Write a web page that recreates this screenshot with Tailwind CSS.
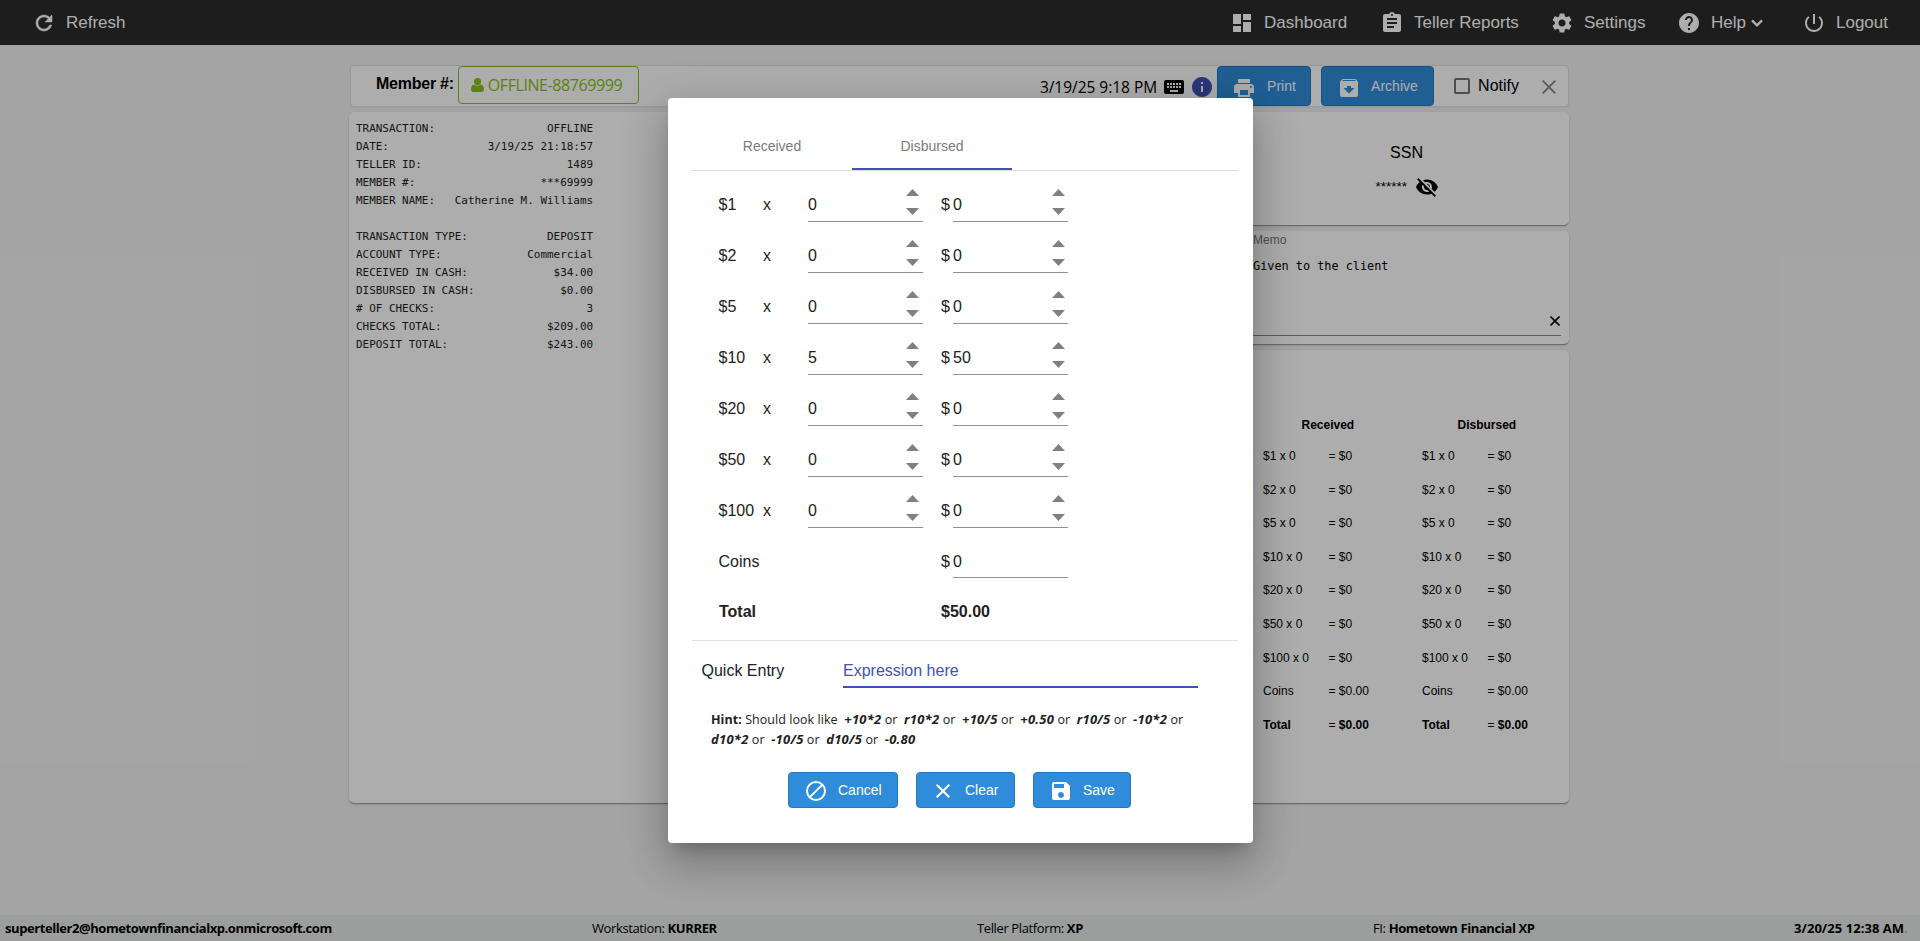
<!DOCTYPE html>
<html lang="en">
<head>
<meta charset="utf-8">
<title>Teller</title>
<script src="https://cdn.jsdelivr.net/npm/@tailwindcss/browser@4"></script>
</head>
<body class="relative h-[941px] w-[1920px] overflow-hidden bg-[#f2f2f2] font-['Liberation_Sans',sans-serif] text-black">
<div class="flex h-full flex-col">
  <nav class="flex h-[45px] shrink-0 items-center bg-[#2c2c2c] pr-8 pl-[32px] text-[17px] text-white">
    <div class="flex items-center">
      <svg class="h-6 w-6" viewBox="0 0 24 24" fill="currentColor" stroke="currentColor" stroke-width=".5"><path d="M17.65 6.35C16.2 4.9 14.21 4 12 4c-4.42 0-7.99 3.58-7.99 8s3.57 8 7.99 8c3.73 0 6.84-2.55 7.73-6h-2.08c-.82 2.33-3.04 4-5.65 4-3.31 0-6-2.69-6-6s2.69-6 6-6c1.66 0 3.14.69 4.22 1.78L13 11h7V4l-2.35 2.35z"/></svg>
      <span class="ml-[10px]">Refresh</span>
    </div>
    <div class="ml-auto flex items-center">
      <div class="flex w-[150px] items-center"><svg class="mr-[10px] h-6 w-6" viewBox="0 0 24 24" fill="currentColor"><path d="M3 13h8V3H3v10zm0 8h8v-6H3v6zm10 0h8V11h-8v10zm0-18v6h8V3h-8z"/></svg>Dashboard</div>
      <div class="flex w-[170px] items-center"><svg class="mr-[10px] h-6 w-6" viewBox="0 0 24 24" fill="currentColor"><path d="M19 3h-4.18C14.4 1.84 13.3 1 12 1c-1.3 0-2.4.84-2.82 2H5c-1.1 0-2 .9-2 2v14c0 1.100.9 2 2 2h14c1.100 0 2-.9 2-2V5c0-1.100-.9-2-2-2zm-7 0c.55 0 1 .45 1 1s-.45 1-1 1-1-.45-1-1 .45-1 1-1zm2 14H7v-2h7v2zm3-4H7v-2h10v2zm0-4H7V7h10v2z"/></svg>Teller Reports</div>
      <div class="flex w-[127px] items-center"><svg class="mr-[10px] h-6 w-6" viewBox="0 0 24 24" fill="currentColor"><path d="M19.140 12.940c.04-.3.06-.61.06-.940 0-.32-.02-.64-.07-.940l2.030-1.580c.18-.14.23-.41.12-.610l-1.920-3.320c-.12-.22-.37-.29-.59-.22l-2.390.960c-.5-.38-1.030-.7-1.620-.940l-.36-2.540c-.04-.24-.24-.41-.48-.41h-3.840c-.24 0-.43.17-.47.41l-.36 2.540c-.59.24-1.130.57-1.620.940l-2.390-.960c-.22-.08-.47 0-.59.22L2.740 8.870c-.12.21-.08.47.12.610l2.030 1.580c-.05.3-.09.63-.09.940s.02.64.07.940l-2.030 1.580c-.18.14-.23.41-.12.610l1.920 3.320c.12.22.37.29.59.22l2.390-.960c.5.38 1.030.7 1.620.940l.36 2.540c.05.24.24.41.48.41h3.840c.24 0 .44-.17.47-.41l.36-2.540c.59-.24 1.130-.56 1.620-.940l2.390.960c.22.08.47 0 .59-.22l1.920-3.320c.12-.22.07-.47-.12-.610l-2.010-1.580zM12 15.600c-1.980 0-3.600-1.620-3.600-3.600s1.620-3.600 3.600-3.600 3.600 1.620 3.600 3.600-1.620 3.600-3.600 3.600z"/></svg>Settings</div>
      <div class="flex w-[125px] items-center"><svg class="mr-[10px] h-6 w-6" viewBox="0 0 24 24" fill="currentColor"><path d="M12 2C6.480 2 2 6.480 2 12s4.480 10 10 10 10-4.480 10-10S17.520 2 12 2zm1 17h-2v-2h2v2zm2.070-7.750l-.9.920C13.450 12.900 13 13.500 13 15h-2v-.5c0-1.100.45-2.100 1.170-2.830l1.240-1.260c.37-.36.59-.86.59-1.410 0-1.100-.9-2-2-2s-2 .9-2 2H8c0-2.210 1.790-4 4-4s4 1.790 4 4c0 .88-.36 1.680-.93 2.250z"/></svg>Help<svg class="ml-[5px] h-3 w-3" viewBox="0 0 12 12" fill="none" stroke="currentColor" stroke-width="2.4"><path d="M1 3.300l5 5 5-5"/></svg></div>
      <div class="flex items-center"><svg class="mr-[10px] h-6 w-6" viewBox="0 0 24 24" fill="currentColor"><path d="M13 3h-2v10h2V3zm4.830 2.170l-1.420 1.420C17.990 7.860 19 9.810 19 12c0 3.870-3.130 7-7 7s-7-3.130-7-7c0-2.190 1.010-4.140 2.580-5.420L6.170 5.170C4.230 6.820 3 9.260 3 12c0 4.970 4.030 9 9 9s9-4.030 9-9c0-2.740-1.230-5.180-3.170-6.830z"/></svg>Logout</div>
    </div>
  </nav>

  <main class="ml-[349px] flex w-[1220px] flex-1 flex-col pt-5">
    <header class="ml-[1px] flex h-[42px] shrink-0 items-center rounded border border-[#e0e0e0] bg-white pr-3 pl-[25px] shadow-xs">
      <b class="-translate-y-[2px] text-base tracking-[-0.25px] whitespace-nowrap">Member #:</b>
      <div class="mb-[2px] ml-[4px] flex h-[38px] w-[181px] items-center rounded border border-[#86c020] pl-3 font-['Open_Sans',sans-serif] text-base text-[#86c020]">
        <svg class="mr-[4px] h-[14px] w-[13px]" viewBox="0 0 13 14" fill="currentColor"><circle cx="6.500" cy="3.600" r="3.600"/><path d="M0 11.500C0 8.500 1.200 6.800 3 6.500c2 1.700 5 1.700 7 0 1.800.3 3 2 3 5C13 13 12 14 10.800 14H2.200C1 14 0 13 0 11.500z"/></svg>
        <span class="text-[16px] tracking-[-0.42px]">OFFLINE-88769999</span>
      </div>
      <div class="ml-auto flex items-center">
        <span class="mt-[4px] font-['Open_Sans',sans-serif] text-[15.5px] tracking-[-0.03px] whitespace-nowrap">3/19/25 9:18 PM</span>
        <svg class="mt-[2px] ml-[5px] h-6 w-6" viewBox="0 0 24 24" fill="currentColor"><path d="M20 5H4c-1.100 0-1.990.9-1.990 2L2 17c0 1.100.9 2 2 2h16c1.100 0 2-.9 2-2V7c0-1.100-.9-2-2-2zm-9 3h2v2h-2V8zm0 3h2v2h-2v-2zM8 8h2v2H8V8zm0 3h2v2H8v-2zm-1 2H5v-2h2v2zm0-3H5V8h2v2zm9 7H8v-2h8v2zm0-4h-2v-2h2v2zm0-3h-2V8h2v2zm3 3h-2v-2h2v2zm0-3h-2V8h2v2z"/></svg>
        <svg class="mt-[2px] ml-[4px] h-6 w-6 text-[#3f51b5]" viewBox="0 0 24 24" fill="currentColor"><path d="M12 2C6.480 2 2 6.480 2 12s4.480 10 10 10 10-4.480 10-10S17.520 2 12 2z"/><path fill="#fff" d="M11 11h2v6h-2zM11 7h2v2h-2z"/></svg>
        <div class="ml-[3px] flex h-10 w-[94px] items-center rounded border border-[#2377c2] bg-[#2f8cdb] pl-[14px] text-sm text-white"><svg class="mt-1 mr-[11px] h-6 w-6" viewBox="0 0 24 24" fill="currentColor"><path d="M19 8H5c-1.660 0-3 1.340-3 3v6h4v4h12v-4h4v-6c0-1.660-1.340-3-3-3zm-3 11H8v-5h8v5zm3-7c-.55 0-1-.45-1-1s.45-1 1-1 1 .45 1 1-.45 1-1 1zm-1-9H6v4h12V3z"/></svg>Print</div>
        <div class="ml-[10px] flex h-10 w-[113px] items-center rounded border border-[#2377c2] bg-[#2f8cdb] pl-[15px] text-sm text-white"><svg class="mt-1 mr-[10px] h-6 w-6" viewBox="0 0 24 24" fill="currentColor"><path d="M20.540 5.230l-1.390-1.680C18.880 3.210 18.470 3 18 3H6c-.47 0-.88.210-1.160.550L3.460 5.230C3.170 5.570 3 6.020 3 6.500V19c0 1.100.9 2 2 2h14c1.100 0 2-.9 2-2V6.500c0-.48-.17-.93-.46-1.270zM12 17.500L6.500 12H10v-2h4v2h3.500L12 17.500zM5.120 5l.810-1h12l.940 1H5.120z"/></svg>Archive</div>
        <span class="ml-[20px] h-4 w-4 rounded-xs border-2 border-[#757575]"></span>
        <span class="ml-2 text-base">Notify</span>
        <svg class="mt-[2px] ml-[23px] h-[14px] w-[14px] text-[#808080]" viewBox="0 0 14 14" fill="none" stroke="currentColor" stroke-width="1.700"><path d="M.7.700l12.600 12.600M13.300.700L.7 13.300"/></svg>
      </div>
    </header>

    <div class="mt-[5px] flex h-[691px] gap-2">
      <section class="w-[540px] rounded-[5px] bg-white pt-[8px] pl-[7px] shadow-[0_2px_1px_-1px_rgba(0,0,0,.2),0_1px_1px_rgba(0,0,0,.14),0_1px_3px_rgba(0,0,0,.12)]">
        <pre id="receipt" class="font-['DejaVu_Sans_Mono',monospace] text-[10.95px] leading-[18px] text-[#222]"></pre>
      </section>
      <div class="flex flex-1 flex-col gap-[6px]">
        <section class="flex h-[113px] flex-col items-end rounded-[5px] bg-white pt-[29px] pr-[130px] shadow-[0_2px_1px_-1px_rgba(0,0,0,.2),0_1px_1px_rgba(0,0,0,.14),0_1px_3px_rgba(0,0,0,.12)]">
          <div class="mr-[16px] text-base">SSN</div>
          <div class="mt-[10px] flex items-center"><span class="mr-[8px] text-[13.500px]">******</span><svg class="h-6 w-6" viewBox="0 0 24 24" fill="currentColor"><path d="M12 7c2.760 0 5 2.240 5 5 0 .65-.13 1.260-.36 1.830l2.920 2.920c1.510-1.260 2.700-2.890 3.430-4.750-1.730-4.390-6-7.500-11-7.500-1.400 0-2.740.250-3.980.7l2.160 2.160C10.740 7.130 11.350 7 12 7zM2 4.270l2.280 2.280.46.460C3.080 8.300 1.780 10.020 1 12c1.730 4.390 6 7.500 11 7.500 1.550 0 3.030-.3 4.380-.84l.42.42L19.730 22 21 20.730 3.270 3 2 4.270zM7.530 9.800l1.550 1.550c-.05.210-.08.430-.08.650 0 1.660 1.340 3 3 3 .22 0 .44-.03.65-.08l1.550 1.550c-.67.33-1.410.53-2.200.53-2.760 0-5-2.240-5-5 0-.79.2-1.530.53-2.200zm4.310-.780l3.150 3.150.02-.160c0-1.660-1.340-3-3-3l-.17.010z"/></svg></div>
        </section>
        <section class="flex h-[113px] flex-col rounded-[5px] bg-white pt-[2px] pr-2 shadow-[0_2px_1px_-1px_rgba(0,0,0,.2),0_1px_1px_rgba(0,0,0,.14),0_1px_3px_rgba(0,0,0,.12)]">
          <div class="flex h-[103px] flex-col border-b border-[#8a8a8a] pl-[356px]">
            <span class="text-xs leading-[14px] text-[#777]">Memo</span>
            <span class="mt-[10px] font-['DejaVu_Sans_Mono',monospace] text-[11.85px] leading-[18px] whitespace-nowrap">Given to the client</span>
            <svg class="mt-auto mr-[1px] mb-[9px] ml-auto h-[10px] w-[10px]" viewBox="0 0 10 10" fill="none" stroke="currentColor" stroke-width="1.600"><path d="M.5.5l9 9M9.500.5l-9 9"/></svg>
          </div>
        </section>
        <section class="flex flex-1 justify-end rounded-[5px] bg-white pt-[57px] shadow-[0_2px_1px_-1px_rgba(0,0,0,.2),0_1px_1px_rgba(0,0,0,.14),0_1px_3px_rgba(0,0,0,.12)]">
          <div id="cash" class="flex text-xs"></div>
        </section>
      </div>
    </div>
  </main>

  <footer class="flex h-[26px] shrink-0 items-center bg-[#e6e8e7] pt-[2px] pl-[5px] font-['Open_Sans',sans-serif] text-[13px] tracking-[-0.38px] whitespace-nowrap">
    <b class="w-[587px] tracking-[-0.43px]">superteller2@hometownfinancialxp.onmicrosoft.com</b>
    <span class="w-[385px]">Workstation: <b>KURRER</b></span>
    <span class="w-[396px]">Teller Platform: <b>XP</b></span>
    <span class="w-[421px]">FI: <b>Hometown Financial XP</b></span>
    <span class="tracking-[0.05px]"><b>3/20/25 12:38 AM</b><span class="text-[#999]">.</span></span>
  </footer>
</div>

<div class="absolute inset-0 bg-black/32"></div>

<div class="absolute top-[98px] left-[668px] flex h-[745px] w-[585px] flex-col rounded bg-white pr-[15px] pl-6 text-[#212121] shadow-[0_11px_15px_-7px_rgba(0,0,0,.2),0_24px_38px_3px_rgba(0,0,0,.14),0_9px_46px_8px_rgba(0,0,0,.12)]">
  <div class="mt-6 flex h-[49px] shrink-0 border-b border-[#dedede] text-sm text-[#7b7b7b]">
    <div class="flex w-40 items-center justify-center">Received</div>
    <div class="flex w-40 items-center justify-center border-b-2 border-[#3f51b5] pt-[2px]">Disbursed</div>
  </div>
  <div id="rows" class="text-base"></div>
  <div class="flex h-[57px] items-center pt-[10px] pl-[27px] text-base"><b class="w-[222px]">Total</b><b>$50.00</b></div>
  <div class="mt-[5px] flex h-[48px] items-end border-t border-[#e2e2e2] pl-[9.5px] text-base">
    <span class="w-[141.5px] pb-[5px]">Quick Entry</span>
    <span class="w-[355px] border-b-2 border-[#3f51b5] pb-[3px] text-[#3f51b5]">Expression here</span>
  </div>
  <div class="mt-[22px] ml-[19px] font-['Open_Sans',sans-serif] text-[12.500px] leading-5 tracking-[0.05px] whitespace-nowrap [&_i]:text-[13px] [&_i]:leading-none [&_i]:tracking-[0.25px]">
    <div class="h-5"><b>Hint:</b> Should look like&nbsp; <b><i>+10*2</i></b> or&nbsp; <b><i>r10*2</i></b> or&nbsp; <b><i>+10/5</i></b> or&nbsp; <b><i>+0.50</i></b> or&nbsp; <b><i>r10/5</i></b> or&nbsp; <b><i>-10*2</i></b> or</div>
    <div class="h-5"><b><i>d10*2</i></b> or&nbsp; <b><i>-10/5</i></b> or&nbsp; <b><i>d10/5</i></b> or&nbsp; <b><i>-0.80</i></b></div>
  </div>
  <div class="mt-[22px] ml-24 flex gap-[18px] text-sm text-white">
    <div class="flex h-9 w-[110px] items-center rounded border border-[#2377c2] bg-[#2f8cdb] pl-[15px]"><svg class="mt-[2px] mr-[10px] h-6 w-6" viewBox="0 0 24 24" fill="none" stroke="currentColor" stroke-width="2"><circle cx="12" cy="12" r="9"/><path d="M5.600 18.400L18.400 5.600"/></svg>Cancel</div>
    <div class="flex h-9 w-[99px] items-center rounded border border-[#2377c2] bg-[#2f8cdb] pl-[14px]"><svg class="mt-[2px] mr-[10px] h-6 w-6" viewBox="0 0 24 24" fill="currentColor"><path d="M19 6.410L17.590 5 12 10.590 6.410 5 5 6.410 10.590 12 5 17.590 6.410 19 12 13.410 17.590 19 19 17.590 13.410 12z"/></svg>Clear</div>
    <div class="flex h-9 w-[98px] items-center rounded border border-[#2377c2] bg-[#2f8cdb] pl-[15px]"><svg class="mt-[2px] mr-[10px] h-6 w-6" viewBox="0 0 24 24" fill="currentColor"><path d="M17 3H5c-1.110 0-2 .9-2 2v14c0 1.100.890 2 2 2h14c1.100 0 2-.9 2-2V7l-4-4zm-5 16c-1.660 0-3-1.340-3-3s1.340-3 3-3 3 1.340 3 3-1.340 3-3 3zm3-10H5V5h10v4z"/></svg>Save</div>
  </div>
</div>

<script>
const receipt = [
  ['TRANSACTION:', 'OFFLINE'], ['DATE:', '3/19/25 21:18:57'], ['TELLER ID:', '1489'],
  ['MEMBER #:', '***69999'], ['MEMBER NAME:', 'Catherine M. Williams'], ['', ''],
  ['TRANSACTION TYPE:', 'DEPOSIT'], ['ACCOUNT TYPE:', 'Commercial'], ['RECEIVED IN CASH:', '$34.00'],
  ['DISBURSED IN CASH:', '$0.00'], ['# OF CHECKS:', '3'], ['CHECKS TOTAL:', '$209.00'], ['DEPOSIT TOTAL:', '$243.00'],
];
document.getElementById('receipt').textContent = receipt.map(([a, b]) => a + b.padStart(36 - a.length)).join('\n');

const bills = [1, 2, 5, 10, 20, 50, 100];
const cashColumn = (title, cls) => `<div class="${cls}"><div class="${title === 'Received' ? 'h-[31px] pl-[38.5px] font-bold' : 'h-[31px] pl-[35.5px] font-bold'}">${title}</div>` +
  bills.map(b => [`$${b} x 0`, '= $0', '']).concat([['Coins', '= $0.00', ''], ['Total', '= <b>$0.00</b>', 'font-bold']])
    .map(([a, v, w]) => `<div class="flex h-[33.6px] items-start whitespace-nowrap"><span class="w-[65.5px] ${w}">${a}</span><span>${v}</span></div>`).join('') + '</div>';
document.getElementById('cash').innerHTML = cashColumn('Received', 'w-[159px] pt-[10px]') + cashColumn('Disbursed', 'w-[147px] pt-[10px]');

const spin = '<svg class="mr-[4px] mb-[6px] ml-auto h-[26px] w-[13px]" viewBox="0 0 13 26" fill="#808080"><path d="M0 7L6.500 0 13 7zM0 19l6.500 7L13 19z"/></svg>';
const spinTotal = '<svg class="mr-[3px] mb-[6px] ml-auto h-[26px] w-[13px]" viewBox="0 0 13 26" fill="#808080"><path d="M0 7L6.500 0 13 7zM0 19l6.500 7L13 19z"/></svg>';
document.getElementById('rows').innerHTML = bills.map(b => {
  const n = b === 10 ? 5 : 0;
  return `<div class="flex h-[51px] items-end pl-[26.5px]"><span class="w-[44.5px] pb-[5px]">$${b}</span><span class="w-[45px] pb-[5px]">x</span>
    <span class="flex h-[42px] w-[115px] items-end border-b border-[#8f8f8f]"><span class="pb-[4px]">${n}</span>${spin}</span>
    <span class="ml-[18px] w-[12px] pb-[5px]">$</span>
    <span class="flex h-[42px] w-[115px] items-end border-b border-[#8f8f8f]"><span class="pb-[4px]">${n * b}</span>${spinTotal}</span></div>`;
}).join('') + `<div class="flex h-[50px] items-end pl-[26.5px]"><span class="w-[222.5px] pb-[4px]">Coins</span><span class="w-[12px] pb-[4px]">$</span><span class="w-[115px] border-b border-[#8f8f8f] pb-[3px]">0</span></div>`;
</script>
</body>
</html>
